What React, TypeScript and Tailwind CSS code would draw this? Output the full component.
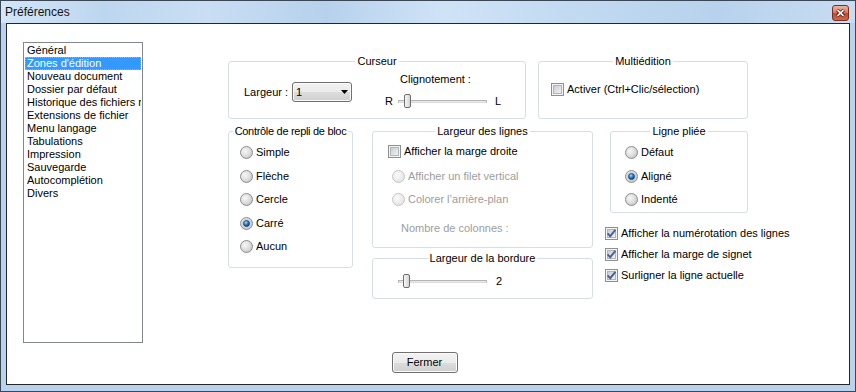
import React from "react";

function CheckBox({ checked }: { checked?: boolean }) {
  return (
    <svg width="13" height="13" viewBox="0 0 13 13" className="shrink-0">
      <defs>
        <linearGradient id="cbg" x1="0" y1="0" x2="1" y2="1">
          <stop offset="0" stopColor="#c6cbd2" />
          <stop offset="1" stopColor="#f4f4f4" />
        </linearGradient>
      </defs>
      <rect x="0.5" y="0.5" width="12" height="12" fill="#f4f4f4" stroke="#8e8f8f" />
      <rect x="2.5" y="2.5" width="8" height="8" fill="url(#cbg)" stroke="#b1b5ba" />
      {checked && (
        <path d="M2.6 6.4 L5.2 9.2 L10.4 2.8" stroke="#4c5f92" strokeWidth="1.9" fill="none" />
      )}
    </svg>
  );
}

function Radio({ checked, disabled }: { checked?: boolean; disabled?: boolean }) {
  return (
    <svg width="13" height="13" viewBox="0 0 13 13" className="shrink-0">
      <defs>
        <radialGradient id="rbg" cx="0.38" cy="0.38" r="0.7">
          <stop offset="0" stopColor="#f8f8f8" />
          <stop offset="0.6" stopColor="#dcdcdc" />
          <stop offset="1" stopColor="#bfc2c6" />
        </radialGradient>
        <radialGradient id="rbgd" cx="0.38" cy="0.38" r="0.7">
          <stop offset="0" stopColor="#fbfbfb" />
          <stop offset="1" stopColor="#e2e2e2" />
        </radialGradient>
        <radialGradient id="rdot" cx="0.4" cy="0.35" r="0.65">
          <stop offset="0" stopColor="#a8e4ff" />
          <stop offset="0.45" stopColor="#2b8bd6" />
          <stop offset="1" stopColor="#0d3f7a" />
        </radialGradient>
      </defs>
      <circle
        cx="6.5"
        cy="6.5"
        r="6"
        fill={disabled ? "url(#rbgd)" : "url(#rbg)"}
        stroke={disabled ? "#c6c6c6" : "#8c8e90"}
      />
      {checked && <circle cx="6.5" cy="6.5" r="4.3" fill="#f2f2f2" stroke="#b8bcc0" strokeWidth="0.6" />}
      {checked && <circle cx="6.5" cy="6.5" r="3.1" fill="url(#rdot)" stroke="#1a3a64" strokeWidth="0.7" />}
    </svg>
  );
}

function Group({
  title,
  className,
  legendClass,
  children,
}: {
  title: string;
  className: string;
  legendClass?: string;
  children?: React.ReactNode;
}) {
  return (
    <fieldset className={"border border-[#d5dfe5] rounded-[3px] shrink-0 " + className}>
      <legend className={"mx-auto px-[2px] leading-[13px] whitespace-nowrap " + (legendClass || "")}>{title}</legend>
      {children}
    </fieldset>
  );
}

function Slider({ thumb }: { thumb: string }) {
  return (
    <div className="relative w-[89px] h-[14px] flex items-center shrink-0">
      <div className="w-full h-[3px] bg-[#e7e7e7] border border-[#b4b4b4] border-b-[#dcdcdc]" />
      <div
        className={
          "absolute top-[0px] w-[7px] h-[14px] rounded-[2px] border border-[#6f6f6f] bg-[linear-gradient(90deg,#f6f6f6_0%,#e6e6e6_50%,#d2d2d2_100%)] " +
          thumb
        }
      />
    </div>
  );
}

const items = [
  "Général",
  "Zones d'édition",
  "Nouveau document",
  "Dossier par défaut",
  "Historique des fichiers récents",
  "Extensions de fichier",
  "Menu langage",
  "Tabulations",
  "Impression",
  "Sauvegarde",
  "Autocomplétion",
  "Divers",
];

export default function App() {
  return (
    <div className="w-[856px] h-[392px] border border-[#3b4754] bg-[#bad3ed] flex flex-col font-['Liberation_Sans',Arial,sans-serif] text-[11px] text-black">
      {/* Title bar */}
      <div className="h-[22px] shrink-0 flex items-start justify-between pl-[4px] pr-[6px] bg-[linear-gradient(90deg,#d4e6f8_0%,#bdd6ef_12%,#c9def4_24%,#b7d1ec_38%,#cfe3f7_52%,#c1d9f1_68%,#b8d2ed_84%,#c8dcf2_100%)]">
        <span className="text-[12px] leading-[22px] text-[#141414]">Préférences</span>
        <div className="mt-[4px] w-[17px] h-[16px] rounded-[3px] border border-[#7a2e21] bg-[linear-gradient(180deg,#ecb5a5_0%,#dc7d63_45%,#c4462c_55%,#d0694c_100%)] flex items-center justify-center">
          <svg width="9" height="8" viewBox="0 0 9 8">
            <path d="M1.2 1 L7.8 7 M7.8 1 L1.2 7" stroke="#4a1c14" strokeWidth="3.2" />
            <path d="M1.5 1.2 L7.5 6.8 M7.5 1.2 L1.5 6.8" stroke="#ffffff" strokeWidth="1.6" />
          </svg>
        </div>
      </div>

      {/* Client area */}
      <div className="mx-[5px] h-[362px] shrink-0 border border-[#262626] bg-white flex flex-col">
        <div className="flex items-start">
          {/* List */}
          <div className="ml-[16px] mt-[18px] w-[120px] h-[301px] shrink-0 border border-[#828790] bg-white pt-[1px] px-[1px]">
            {items.map((t, i) =>
              i === 1 ? (
                <div
                  key={t}
                  className="h-[13px] leading-[13px] pl-[2px] whitespace-nowrap overflow-hidden bg-[#3399ff] text-white outline-1 outline-dotted outline-[#d9a35c] -outline-offset-1"
                >
                  {t}
                </div>
              ) : (
                <div key={t} className="h-[13px] leading-[13px] pl-[2px] whitespace-nowrap overflow-hidden">
                  {t}
                </div>
              )
            )}
          </div>

          {/* Right area */}
          <div className="ml-[85px] mt-[31px] flex flex-col">
            {/* Row 1 */}
            <div className="flex">
              <Group title="Curseur" className="w-[298px] h-[64px]">
                <div className="flex pl-[15px]">
                  <div className="flex items-center mt-[14px] h-[20px]">
                    <span className="w-[48px] shrink-0">Largeur :</span>
                    <div className="w-[60px] h-[20px] shrink-0 rounded-[3px] border border-[#707070] bg-[linear-gradient(180deg,#f2f2f2_0%,#ebebeb_50%,#dddddd_50%,#cfcfcf_100%)] shadow-[inset_0_0_0_1px_#fbfbfb] flex items-center justify-between pl-[3px] pr-[3px]">
                      <span className="leading-[13px]">1</span>
                      <svg width="7" height="4" viewBox="0 0 7 4">
                        <path d="M0 0 H7 L3.5 4 Z" fill="#000" />
                      </svg>
                    </div>
                  </div>
                  <div className="ml-[33px] flex flex-col">
                    <span className="ml-[15px] mt-[5px] leading-[13px]">Clignotement :</span>
                    <div className="mt-[8px] h-[14px] flex items-center">
                      <span className="w-[13px] shrink-0 leading-[13px]">R</span>
                      <Slider thumb="left-[6px]" />
                      <span className="ml-[8px] leading-[13px]">L</span>
                    </div>
                  </div>
                </div>
              </Group>
              <Group title="Multiédition" className="ml-[12px] w-[210px] h-[64px]">
                <div className="pl-[12px] mt-[15px] h-[13px] flex items-center">
                  <CheckBox />
                  <span className="ml-[3px] leading-[13px]">Activer (Ctrl+Clic/sélection)</span>
                </div>
              </Group>
            </div>

            {/* Row 2 */}
            <div className="flex items-start mt-[6px]">
              <Group
                title="Contrôle de repli de bloc"
                className="w-[125px] h-[143px]"
                legendClass="tracking-[-0.3px] px-[1px]"
              >
                <div className="pt-[3px] pl-[11px] flex flex-col">
                  {["Simple", "Flèche", "Cercle", "Carré", "Aucun"].map((t) => (
                    <div key={t} className="h-[23.5px] flex items-center">
                      <Radio checked={t === "Carré"} />
                      <span className="ml-[3px] leading-[13px]">{t}</span>
                    </div>
                  ))}
                </div>
              </Group>

              <div className="ml-[19px] flex flex-col">
                <Group title="Largeur des lignes" className="w-[221px] h-[123px]">
                  <div className="flex flex-col">
                    <div className="mt-[7px] h-[13px] pl-[15px] flex items-center">
                      <CheckBox />
                      <span className="ml-[3px] leading-[13px]">Afficher la marge droite</span>
                    </div>
                    <div className="mt-[12px] h-[13px] pl-[19px] flex items-center text-[#9d9d9d]">
                      <Radio disabled />
                      <span className="ml-[3px] leading-[13px]">Afficher un filet vertical</span>
                    </div>
                    <div className="mt-[10px] h-[13px] pl-[19px] flex items-center text-[#9d9d9d]">
                      <Radio disabled />
                      <span className="ml-[3px] leading-[13px]">Colorer l’arrière-plan</span>
                    </div>
                    <div className="mt-[16px] h-[13px] pl-[28px] leading-[13px] text-[#9d9d9d]">
                      Nombre de colonnes :
                    </div>
                  </div>
                </Group>
                <Group title="Largeur de la bordure" className="mt-[4px] w-[221px] h-[47px]">
                  <div className="mt-[9px] pl-[25px] h-[14px] flex items-center">
                    <Slider thumb="left-[5px]" />
                    <span className="ml-[9px] leading-[13px]">2</span>
                  </div>
                </Group>
              </div>

              <div className="ml-[12px] flex flex-col">
                <Group title="Ligne pliée" className="ml-[5px] w-[138px] h-[88px]">
                  <div className="pt-[3px] pl-[14px] flex flex-col">
                    {["Défaut", "Aligné", "Indenté"].map((t) => (
                      <div key={t} className="h-[23.5px] flex items-center">
                        <Radio checked={t === "Aligné"} />
                        <span className="ml-[3px] leading-[13px]">{t}</span>
                      </div>
                    ))}
                  </div>
                </Group>
                <div className="mt-[10px] flex flex-col">
                  {[
                    "Afficher la numérotation des lignes",
                    "Afficher la marge de signet",
                    "Surligner la ligne actuelle",
                  ].map((t) => (
                    <div key={t} className="h-[21px] flex items-center whitespace-nowrap">
                      <CheckBox checked />
                      <span className="ml-[3px] leading-[13px]">{t}</span>
                    </div>
                  ))}
                </div>
              </div>
            </div>
          </div>
        </div>

        {/* Button row */}
        <div className="flex justify-center pr-[7px] mt-[9px]">
          <button className="w-[66px] h-[21px] rounded-[3px] border border-[#707070] bg-[linear-gradient(180deg,#f2f2f2_0%,#ebebeb_50%,#dddddd_50%,#cfcfcf_100%)] shadow-[inset_0_0_0_1px_#fbfbfb] leading-[19px] text-black">
            Fermer
          </button>
        </div>
      </div>
    </div>
  );
}
